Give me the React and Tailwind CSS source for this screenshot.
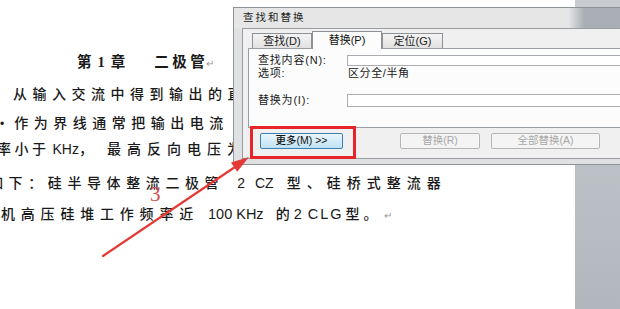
import React from 'react';

const cjk = "font-['Liberation_Sans','Noto_Sans_CJK_SC',sans-serif]";

const Tab = ({ label, active }) => (
  <div
    className={
      active
        ? 'relative z-10 -mb-px flex h-[18px] w-[70px] items-center justify-center border border-b-0 border-[#8d9195] bg-[#fcfcfc] text-[11px] text-[#111]'
        : 'flex h-[15px] w-[60px] items-center justify-center border border-b-0 border-[#8d9195] bg-linear-to-b from-[#f4f4f4] to-[#e2e2e2] text-[11px] text-[#222]'
    }
  >
    {label}
  </div>
);

const Button = ({ label, primary, className }) => (
  <div
    className={`flex h-[16px] items-center justify-center rounded-[2px] border text-[10.5px] ${
      primary
        ? 'border-[#3c7fb1] bg-linear-to-b from-[#eaf6fd] to-[#bfe1f4] font-medium text-[#111]'
        : 'border-[#b3b7ba] bg-[#f4f4f4] text-[#a8a8a8]'
    } ${className}`}
  >
    {label}
  </div>
);

const Dialog = () => (
  <div className="absolute left-[233px] top-[7px] flex h-[158px] w-[400px] flex-col border border-[#8e9398] bg-[#dfe1e3]">
    <div className="flex h-[20px] items-center bg-linear-to-r from-[#e6e6e6] from-[84%] to-[#a9afb5] to-[88%] pl-[9px] text-[10.5px] tracking-[2px] text-[#1e1e1e]">
      查找和替换
    </div>
    <div className="mb-[5px] ml-[8px] flex flex-1 flex-col border border-[#9a9ea2] bg-[#f0f0f0]">
      <div className="flex h-[19px] items-end pl-[9px]">
        <Tab label="查找(D)" />
        <Tab label="替换(P)" active />
        <div className="flex h-[15px] w-[61px] items-center justify-center border border-b-0 border-[#8d9195] bg-linear-to-b from-[#f4f4f4] to-[#e2e2e2] text-[11px] text-[#222]">
          定位(G)
        </div>
      </div>
      <div className="ml-[5px] flex h-[80px] flex-col border border-r-0 border-[#999ea3] bg-[#fcfcfc] pt-[6px] pl-[9px] text-[11px] leading-[11px] text-[#1a1a1a]">
        <div className="flex items-center">
          <span className="w-[89px] tracking-[0.8px]">查找内容(N):</span>
          <div className="h-[11px] flex-1 border border-[#abadb3] bg-white" />
        </div>
        <div className="mt-[2px] flex">
          <span className="w-[90px] tracking-[0.8px]">选项:</span>
          <span className="tracking-[0.6px]">区分全/半角</span>
        </div>
        <div className="mt-[15px] flex items-center">
          <span className="w-[89px] tracking-[0.8px]">替换为(I):</span>
          <div className="h-[13px] flex-1 border border-[#abadb3] bg-white" />
        </div>
      </div>
      <div className="mt-[5px] flex">
        <Button primary label="更多(M)  >>" className="ml-[17px] w-[83px]" />
        <Button label="替换(R)" className="ml-[57px] w-[80px]" />
        <Button label="全部替换(A)" className="ml-[11px] w-[109px]" />
      </div>
    </div>
  </div>
);

export default function App() {
  return (
    <div className={`relative flex h-[309px] w-[620px] overflow-hidden bg-white ${cjk}`}>
      <div className="w-[575px] pt-[52px] text-[14px] font-medium leading-5 text-[#1a1a1a]">
        <div className="h-5 whitespace-nowrap pl-[77px] text-[14.5px] font-bold">
          <span>第</span>
          <span className="ml-[6px] font-['Liberation_Serif',serif]">1</span>
          <span className="ml-[6px]">章</span>
          <span className="ml-[29px] tracking-[3.5px]">二极管</span>
          <span className="ml-[-2px] text-[10px] font-normal text-[#999]">↵</span>
        </div>
        <div className="mt-[12px] h-5 whitespace-nowrap pl-[13px] tracking-[5.5px]">
          从输入交流中得到输出的直流
        </div>
        <div className="mt-[9px] h-5 whitespace-nowrap">
          <span className="text-[12px]">•</span>
          <span className="ml-[10px] tracking-[5.5px]">作为界线通常把输出电流</span>
        </div>
        <div className="mt-[6px] h-5 whitespace-nowrap">
          <span className="ml-[-3px] tracking-[3.5px]">率小于</span>
          <span className="ml-[3px]">KHz</span>
          <span>，</span>
          <span className="ml-[14px] tracking-[6px]">最高反向电压为</span>
        </div>
        <div className="mt-[14px] h-5 whitespace-nowrap">
          <span className="ml-[-11px] tracking-[5.6px]">如下：硅半导体整流二极管</span>
          <span className="ml-[13px]">2</span>
          <span className="ml-[10px]">CZ</span>
          <span className="ml-[13px] tracking-[6px]">型、硅桥式整流器</span>
        </div>
        <div className="mt-[11px] h-5 whitespace-nowrap">
          <span className="ml-[1px] tracking-[5.8px]">机高压硅堆工作频率近</span>
          <span className="ml-[9px] text-[14.5px]">100 KHz</span>
          <span className="ml-[12px]">的</span>
          <span className="ml-[4px] text-[14.5px]">2</span>
          <span className="ml-[6px] text-[14.5px] tracking-[2px]">CLG</span>
          <span className="ml-[2px] tracking-[4px]">型。</span>
          <span className="ml-[2px] text-[10px] font-normal text-[#999]">↵</span>
        </div>
      </div>
      <div className="flex-1 bg-linear-to-b from-[#c9cdd1] to-[#b2b7bd]" />

      <Dialog />

      <div className="absolute left-[250px] top-[126px] h-[33px] w-[106px] border-[3px] border-[#e8242b]" />

      <svg className="pointer-events-none absolute left-0 top-0" width="620" height="309" viewBox="0 0 620 309">
        <line x1="103" y1="256" x2="235" y2="167" stroke="#e53935" strokeWidth="2.2" strokeLinecap="round" />
        <polygon points="249,157 237.2,171.7 231,162.5" fill="#e53935" />
      </svg>

      <div className="absolute left-[150px] top-[184px] font-['Liberation_Serif',serif] text-[21px] leading-none text-[#d24b4b]">
        3
      </div>
    </div>
  );
}
